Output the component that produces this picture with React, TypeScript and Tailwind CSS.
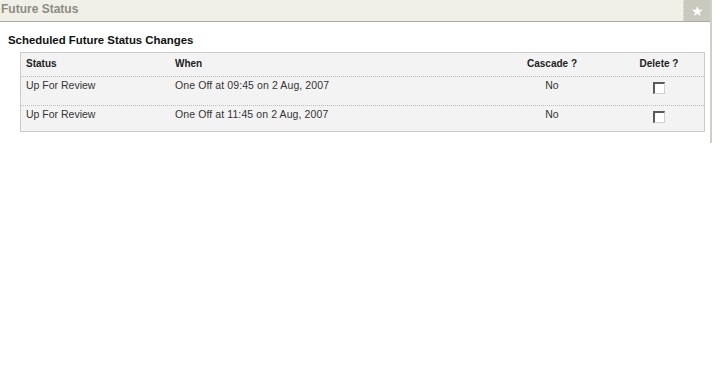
import React from "react";

const rows = [
  { status: "Up For Review", when: "One Off at 09:45 on 2 Aug, 2007", cascade: "No" },
  { status: "Up For Review", when: "One Off at 11:45 on 2 Aug, 2007", cascade: "No" },
];

function Check() {
  return (
    <span className="block w-[12px] h-[12px] bg-white border-t-2 border-l-2 border-t-[#5a5a5a] border-l-[#5a5a5a] border-b border-r border-b-[#d4d0c8] border-r-[#d4d0c8]" />
  );
}

export default function App() {
  return (
    <div
      className="w-[714px] h-[384px] bg-white text-[#333]"
      style={{ fontFamily: '"Liberation Sans", Arial, sans-serif' }}
    >
      <div className="w-[712px] h-[143px] border-r-2 border-[#d0cec6]">
        <div className="flex h-[22px] bg-[#f1f0e8] border-b border-[#a9a9a1]">
          <div className="flex-1 pl-[1px] text-[12px] leading-[19px] font-bold text-[#8c8c82]">
            Future Status
          </div>
          <div className="w-[27px] h-[21px] bg-[#c9c9bd] border-l border-dotted border-[#e8e8e0] flex items-center justify-center text-white text-[14px] leading-none">
            ★
          </div>
        </div>
        <div className="pl-[8px] pt-[11px] text-[11.4px] leading-[14px] font-bold text-[#111]">
          Scheduled Future Status Changes
        </div>
        <div className="ml-[20px] mr-[5px] mt-[5px] bg-[#f3f3f3] border border-[#cccccc]">
          <div className="flex h-[23px] items-start pt-[4px] text-[10px] leading-[14px] font-bold text-[#222]">
            <div className="w-[154px] pl-[5px]">Status</div>
            <div className="flex-1">When</div>
            <div className="w-[124px] text-center">Cascade ?</div>
            <div className="w-[90px] text-center">Delete ?</div>
          </div>
          {rows.map((r, i) => (
            <div
              key={i}
              className={`flex items-start border-t border-dotted border-[#bdbdbd] text-[10.5px] leading-[14px] ${i === 0 ? "h-[29px]" : "h-[26px]"}`}
            >
              <div className="w-[154px] pl-[5px] pt-[1px]">{r.status}</div>
              <div className="flex-1 pt-[1px] tracking-[0.1px]">{r.when}</div>
              <div className="w-[124px] text-center pt-[1px]">{r.cascade}</div>
              <div className="w-[90px] flex justify-center pt-[5px]">
                <Check />
              </div>
            </div>
          ))}
        </div>
      </div>
    </div>
  );
}
